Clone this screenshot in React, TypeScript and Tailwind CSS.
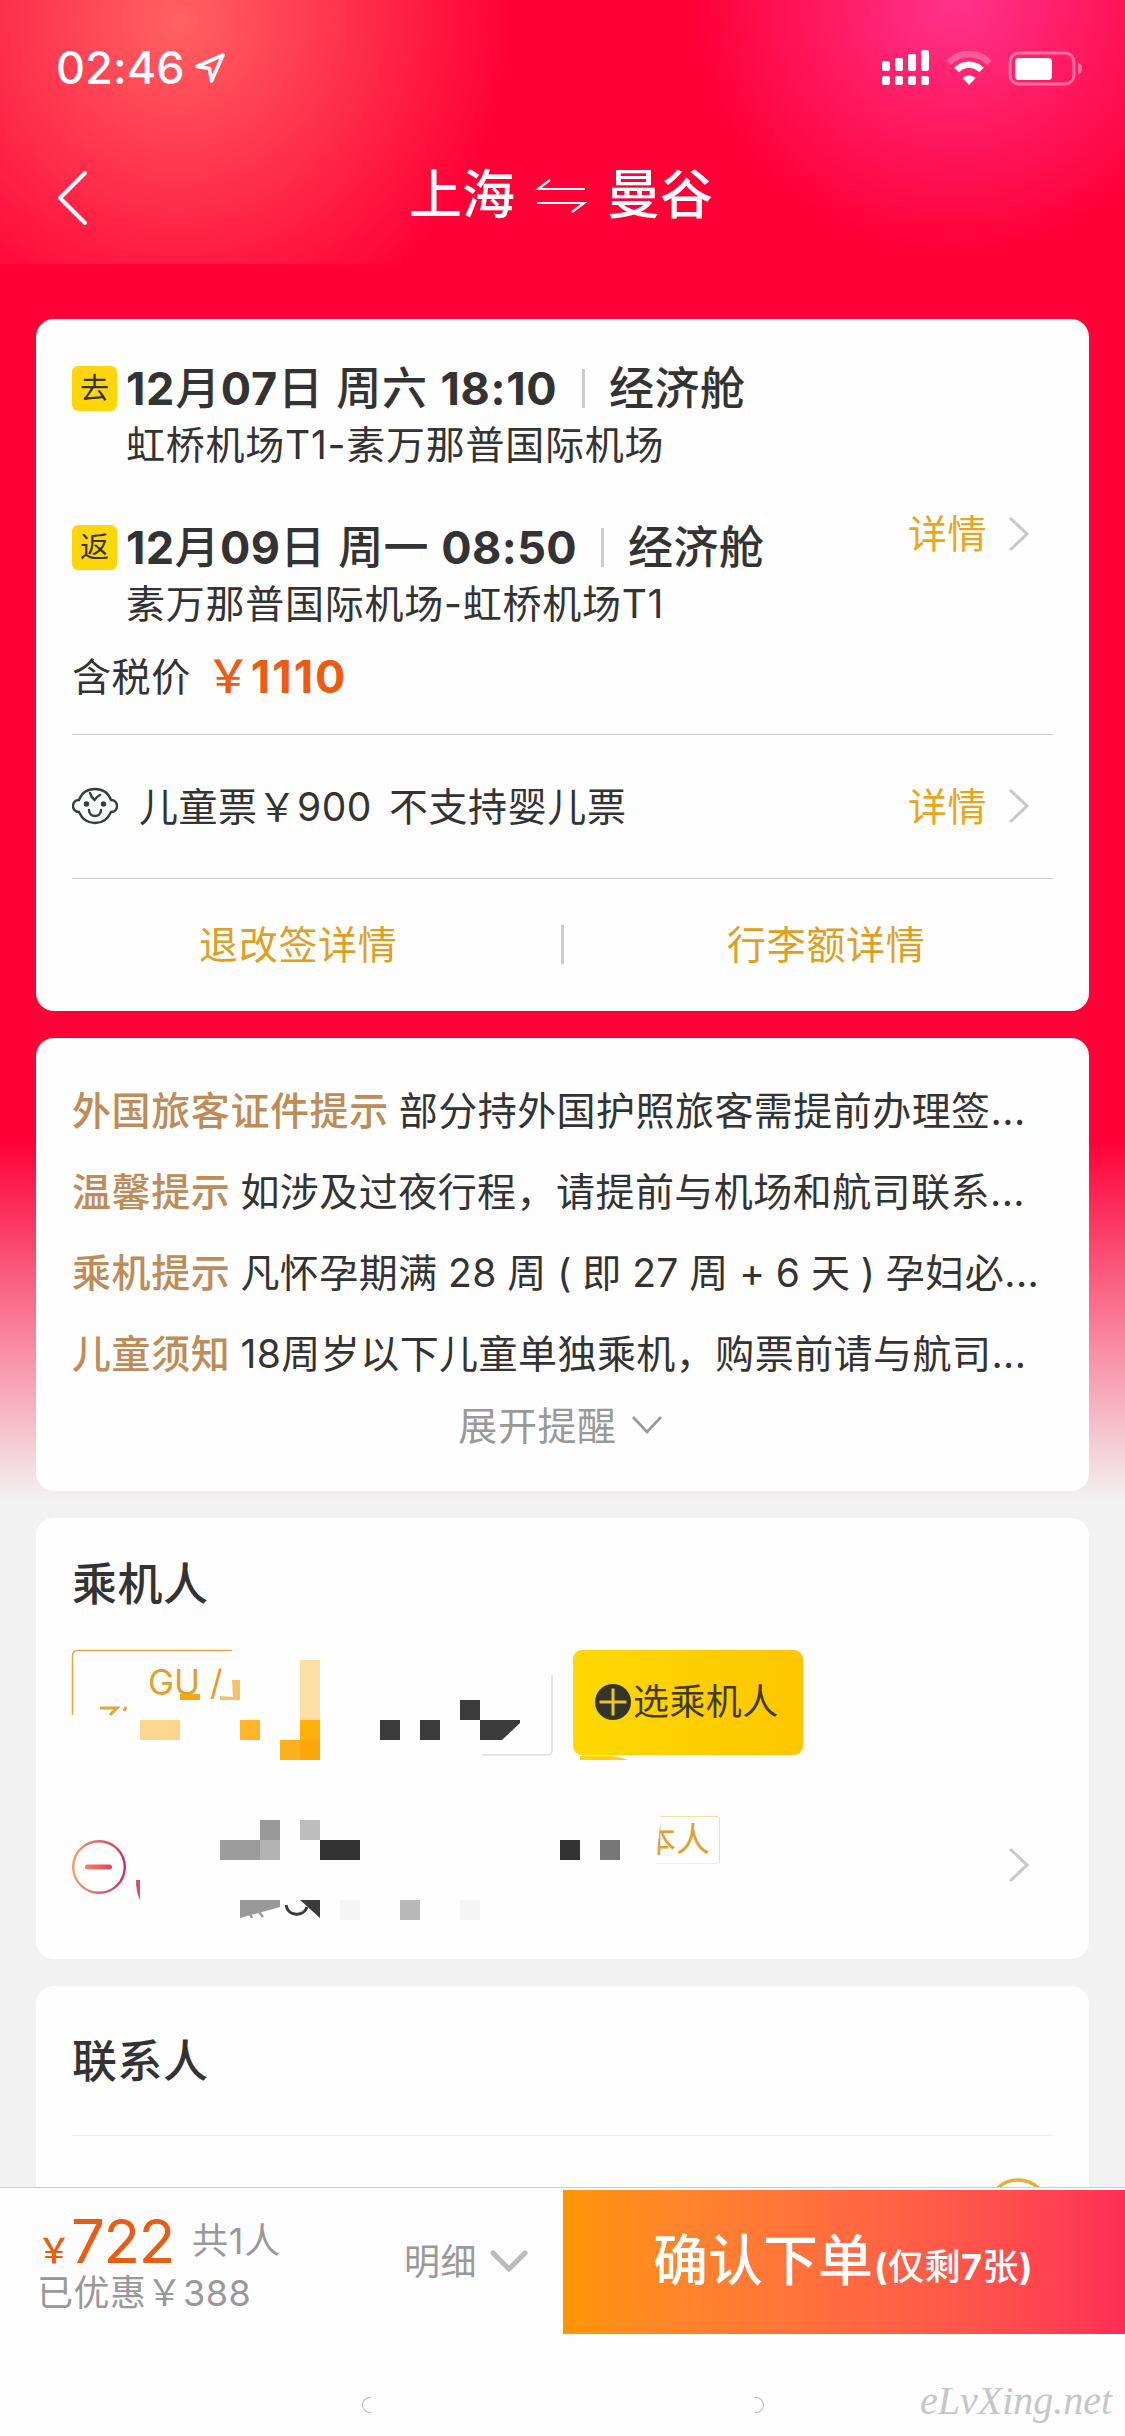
import type { ReactNode } from 'react';

function StatusBar() {
  return (
    <div className="flex h-[134px] items-center justify-between pr-[41px] pl-[56px]">
      <div className="flex items-center gap-[9px] pt-px">
        <span className="text-[45px] leading-none font-medium tracking-[0.1px]">02:46</span>
        <svg width="32" height="32" viewBox="0 0 32 32" fill="none">
          <path d="M29 3 L3 14.5 L15.5 16.5 L17.5 29 Z" stroke="#fff" strokeWidth="3.6" strokeLinejoin="round" />
        </svg>
      </div>
      <svg width="202" height="40" viewBox="0 0 202 40">
        <g fill="#fff">
          <rect x="0" y="14" width="8" height="10" rx="2" />
          <rect x="13" y="11" width="8" height="13" rx="2" />
          <rect x="26" y="7" width="8" height="17" rx="2" />
          <rect x="39" y="3" width="8" height="21" rx="2" />
          <rect x="0" y="29" width="8" height="9" rx="2" />
          <rect x="13" y="29" width="8" height="9" rx="2" />
          <rect x="26" y="29" width="8" height="9" rx="2" />
          <rect x="39" y="29" width="8" height="9" rx="2" />
        </g>
        <g fill="none" strokeWidth="6.5">
          <path d="M66.5 16 A28 28 0 0 1 107.500 16" stroke="#fff" strokeOpacity="0.25" />
          <path d="M74.500 23 A17.500 17.500 0 0 1 99.500 23" stroke="#fff" />
        </g>
        <path d="M80.500 31 Q87 25.500 93.500 31 L87 38 Z" fill="#fff" />
        <rect x="128" y="6" width="64" height="31" rx="9" fill="none" stroke="#fff" strokeOpacity="0.38" strokeWidth="3" />
        <rect x="133" y="11" width="37" height="22" rx="4" fill="#fff" />
        <path d="M196 15.500 Q200 17 200 21.500 Q200 26 196 27.500 Z" fill="#fff" fillOpacity="0.38" />
      </svg>
    </div>
  );
}

function TitleBar() {
  return (
    <div className="relative flex h-[118px] items-center justify-center pt-[4px] pr-[3px] font-medium">
      <svg className="absolute top-[36px] left-[55px]" width="34" height="56" viewBox="0 0 34 56" fill="none">
        <path d="M30 3 L5 28 L30 53" stroke="#fff" strokeWidth="4" strokeLinecap="round" strokeLinejoin="round" />
      </svg>
      <span className="text-[53px] leading-none">上海</span>
      <svg className="mx-[20px]" width="52" height="36" viewBox="0 0 52 36" fill="none" stroke="#fff" strokeWidth="2.2">
        <path d="M50 12 H3 L15 3" />
        <path d="M2 26 H49 L37 35" />
      </svg>
      <span className="text-[53px] leading-none">曼谷</span>
    </div>
  );
}

function ChevronRight() {
  return (
    <svg width="22" height="36" viewBox="0 0 22 36" fill="none">
      <path d="M2 2 L19 18 L2 34" stroke="#c8c8c8" strokeWidth="3" />
    </svg>
  );
}

function BabyIcon() {
  return (
    <svg width="46" height="38" viewBox="0 0 46 38" fill="none" stroke="#34403a" strokeWidth="2.4" strokeLinecap="round">
      <path d="M7 13 C10 5 16 2 23 2 C30 2 36 5 39 13 C43 13 45 16 45 19 C45 22 43 25 39 25 C36 32 30 36 23 36 C16 36 10 32 7 25 C3 25 1 22 1 19 C1 16 3 13 7 13 Z" />
      <path d="M18 6 C19 9 20 11 22.500 13 C24 11 26 9 28 8" />
      <path d="M17 23 C17 31 29 31 29 23" />
      <circle cx="14.500" cy="17" r="1.500" fill="#34403a" />
      <circle cx="31.500" cy="17" r="1.500" fill="#34403a" />
    </svg>
  );
}

interface CardProps {
  className?: string;
  children: ReactNode;
}

function Card({ className = '', children }: CardProps) {
  return <section className={`mx-9 shrink-0 rounded-[18px] bg-[#fefefe] px-9 ${className}`}>{children}</section>;
}

interface FlightProps {
  tag: string;
  date: string;
  route: string;
  dateClass: string;
}

function Flight({ tag, date, route, dateClass }: FlightProps) {
  return (
    <div>
      <div className="flex h-[45px] items-center">
        <span className="flex size-[45px] items-center justify-center rounded-md bg-[#ffd60a] text-[29px] leading-none">
          {tag}
        </span>
        <span className={`ml-[9px] text-[45px] leading-none font-medium whitespace-nowrap ${dateClass}`}>
          {date.split(/([\d:]+)/).map((part, i) => (
            <span key={i} className={i % 2 ? 'font-bold' : ''}>
              {part}
            </span>
          ))}
        </span>
        <span className="h-[39px] w-[3px] bg-[#ccc]" />
        <span className="ml-[24px] text-[45px] leading-none font-medium tracking-[0.5px]">经济舱</span>
      </div>
      <div className="mt-[14px] ml-[54px] text-[39px] leading-[40px] tracking-[0.75px] whitespace-nowrap">{route}</div>
    </div>
  );
}

function DetailLink() {
  return (
    <div className="flex items-center gap-[21px] pr-[23px] text-[#e9a61c]">
      <span className="text-[39px] leading-none tracking-[0.5px]">详情</span>
      <ChevronRight />
    </div>
  );
}

function FlightCard() {
  return (
    <Card className="mt-[55px] h-[692px] pt-[47px]">
      <div className="flex h-[368px] justify-between">
        <div>
          <Flight
            tag="去"
            date="12月07日 周六 18:10"
            route="虹桥机场T1-素万那普国际机场"
            dateClass="w-[456px] tracking-[0.7px]"
          />
          <div className="mt-[60px]">
            <Flight
              tag="返"
              date="12月09日 周一 08:50"
              route="素万那普国际机场-虹桥机场T1"
              dateClass="w-[475px] tracking-[0.4px]"
            />
          </div>
          <div className="mt-[30px] flex h-[45px] items-center">
            <span className="text-[39px] leading-none tracking-[0.6px]">含税价</span>
            <span className="ml-[15px] text-[45px] leading-none font-medium text-[#ef5a12]">
              ￥<b className="font-bold tracking-[2px]">1110</b>
            </span>
          </div>
        </div>
        <div className="pt-[148px]">
          <DetailLink />
        </div>
      </div>
      <div className="flex h-[144px] items-center border-t border-[#ccc] pb-px">
        <BabyIcon />
        <span className="ml-[21px] text-[39px] leading-none tracking-[0.5px] whitespace-nowrap">儿童票￥900</span>
        <span className="ml-[17px] grow text-[39px] leading-none tracking-[0.6px]">不支持婴儿票</span>
        <DetailLink />
      </div>
      <div className="flex h-[133px] items-center border-t border-[#ccc] pb-[2px] text-[39px] leading-none tracking-[0.7px] text-[#dfa022]">
        <span className="w-[489px] pl-[127px]">退改签详情</span>
        <span className="h-[39px] w-[3px] bg-[#ccc]" />
        <span className="pl-[163px]">行李额详情</span>
      </div>
    </Card>
  );
}

const notices = [
  { label: '外国旅客证件提示', text: '部分持外国护照旅客需提前办理签...' },
  { label: '温馨提示', text: '如涉及过夜行程，请提前与机场和航司联系...' },
  { label: '乘机提示', text: '凡怀孕期满 28 周 ( 即 27 周 + 6 天 ) 孕妇必...' },
  { label: '儿童须知', text: '18周岁以下儿童单独乘机，购票前请与航司...' },
];

function NoticeCard() {
  return (
    <Card className="mt-[27px] h-[453px] pt-[32px]">
      {notices.map((notice) => (
        <div key={notice.label} className="flex h-[81px] items-center text-[39px] leading-none whitespace-nowrap">
          <span className="font-medium tracking-[0.6px] text-[#bf8b56]">{notice.label}</span>
          <span className="ml-[10px] tracking-[0.45px] [word-spacing:-1px]">{notice.text}</span>
        </div>
      ))}
      <div className="flex h-[62px] items-center justify-center pr-[4px] text-[#999]">
        <span className="text-[39px] leading-none tracking-[0.6px]">展开提醒</span>
        <svg className="ml-[14px]" width="32" height="20" viewBox="0 0 32 20" fill="none">
          <path d="M2 2 L16 17 L30 2" stroke="#999" strokeWidth="2.6" />
        </svg>
      </div>
    </Card>
  );
}

// Mosaic blocks hiding the personal data, drawn in card coordinates
const blocks = [
  { x: 144, y: 176, w: 20, h: 6, fill: '#f5a810' },
  { x: 104, y: 202, w: 40, h: 20, fill: '#fdd690' },
  { x: 204, y: 202, w: 20, h: 20, fill: '#fdb52b' },
  { x: 264, y: 142, w: 20, h: 60, fill: '#fddfa5' },
  { x: 264, y: 202, w: 20, h: 20, fill: '#fdb10a' },
  { x: 244, y: 222, w: 20, h: 20, fill: '#fcb11c' },
  { x: 264, y: 222, w: 20, h: 20, fill: '#fba70a' },
  { x: 344, y: 202, w: 20, h: 20, fill: '#3b3b3b' },
  { x: 384, y: 202, w: 20, h: 20, fill: '#3b3b3b' },
  { x: 424, y: 182, w: 20, h: 20, fill: '#3b3b3b' },
  { x: 224, y: 302, w: 20, h: 20, fill: '#999' },
  { x: 264, y: 302, w: 20, h: 20, fill: '#bdbdbd' },
  { x: 184, y: 322, w: 40, h: 20, fill: '#9c9c9c' },
  { x: 224, y: 322, w: 20, h: 20, fill: '#b3b3b3' },
  { x: 284, y: 322, w: 40, h: 20, fill: '#333' },
  { x: 524, y: 322, w: 20, h: 20, fill: '#333' },
  { x: 564, y: 322, w: 20, h: 20, fill: '#777' },
  { x: 304, y: 382, w: 20, h: 20, fill: '#f5f5f5' },
  { x: 364, y: 382, w: 20, h: 20, fill: '#b8b8b8' },
  { x: 424, y: 382, w: 20, h: 20, fill: '#f5f5f5' },
];

function Mosaic() {
  return (
    <svg className="absolute top-0 left-0" width="700" height="441" viewBox="0 0 700 441" fill="none">
      <path d="M36.500 197 V138 Q36.500 132.500 42 132.500 H196" stroke="#dfa93c" strokeWidth="1.500" />
      <path d="M516 157 V232 Q516 237 511 237 H446" stroke="#ddd" strokeWidth="1.500" />
      <path d="M64 190 H81 L74 197 M90 189 L88 193" stroke="#e3a43c" strokeWidth="3" />
      {blocks.map((b) => (
        <rect key={`${b.x}-${b.y}`} x={b.x} y={b.y} width={b.w} height={b.h} fill={b.fill} />
      ))}
      <path d="M196 162 H204 V182 H184 V178 L197 179 Z" fill="#f6c168" />
      <path d="M444 202 H484 V205 L466 222 H444 Z" fill="#3b3b3b" />
      <path d="M204 382 H244 V389 L204 400 Z" fill="#999" />
      <path d="M214 396 L216 400 M223 394 L227 399" stroke="#999" strokeWidth="2.500" />
      <path d="M250 387 C252 399 268 399 271 389" stroke="#3b3b3b" strokeWidth="3" />
      <path d="M264 382 H284 V400 Z" fill="#3b3b3b" />
      <path d="M100 362 H104 V382 Q100 374 100 362 Z" fill="#cb5068" />
      <path d="M544 238 H575 Q585 239 592 242 H544 Z" fill="#fbd015" />
    </svg>
  );
}

function PassengerCard() {
  return (
    <Card className="relative mt-[27px] h-[441px]">
      <Mosaic />
      <h2 className="pt-[44px] text-[45px] leading-[46px] font-medium tracking-[0.5px]">乘机人</h2>
      <div className="mt-[42px] flex h-[105px]">
        <div className="w-[501px] pt-[15px] pl-[76px] text-[35px] leading-none text-[#e0a12f]">GU /</div>
        <button className="flex w-[230px] items-center rounded-[9px] bg-linear-to-r from-[#ffd900] to-[#fdc600] pb-[2px] pl-[22px]">
          <svg width="36" height="36" viewBox="0 0 36 36">
            <circle cx="18" cy="18" r="18" fill="#33342a" />
            <path d="M18 4.500 V31.500 M4.500 18 H31.500" stroke="#f0c61c" strokeWidth="3" />
          </svg>
          <span className="ml-[2px] text-[36px] leading-none tracking-[0.4px] text-[#433a0b]">选乘机人</span>
        </button>
      </div>
      <div className="mt-[59px] flex h-[106px] items-center">
        <svg width="54" height="54" viewBox="0 0 54 54" fill="none">
          <defs>
            <linearGradient id="minus" gradientUnits="userSpaceOnUse" x1="0" y1="0" x2="54" y2="0">
              <stop offset="0" stopColor="#f3a06a" />
              <stop offset="1" stopColor="#cf2a5f" />
            </linearGradient>
          </defs>
          <circle cx="27" cy="27" r="25.800" stroke="url(#minus)" strokeWidth="2.400" />
          <rect x="13" y="24.500" width="27" height="5" rx="2.500" fill="url(#minus)" />
        </svg>
        <div className="mt-[-55px] ml-[504px] flex h-[48px] w-[90px] items-center justify-end rounded-[3px] border border-[#f2dfa8] pr-[9px] text-[34px] leading-none whitespace-nowrap text-[#e0a12f] [clip-path:polygon(31px_0,100%_0,100%_100%,26px_100%)]">
          本人
        </div>
        <div className="grow" />
        <div className="mr-[23px] pb-[4px]">
          <ChevronRight />
        </div>
      </div>
    </Card>
  );
}

function ContactCard() {
  return (
    <Card className="mt-[27px] h-[260px]">
      <h2 className="h-[150px] border-b border-[#eee] pt-[53px] text-[45px] leading-[46px] font-medium tracking-[0.5px]">
        联系人
      </h2>
      <div className="flex justify-end pt-[42px]">
        <svg className="mr-[3px]" width="64" height="64" viewBox="0 0 64 64" fill="none">
          <circle cx="32" cy="32" r="30" stroke="#eaae32" strokeWidth="3.500" />
        </svg>
      </div>
    </Card>
  );
}

function BottomBar() {
  return (
    <footer className="absolute inset-x-0 bottom-0 h-[249px] border-t border-[#ccc] bg-[#fdfdfd] text-[#999]">
      <div className="flex h-[146px] pt-[2px]">
        <div className="w-[367px] pl-[37px]">
          <div className="flex h-[83px] items-baseline pt-[19px] whitespace-nowrap">
            <span className="text-[34px] leading-none font-medium text-[#e95c14]">￥</span>
            <span className="text-[60px] leading-[64px] tracking-[-1.4px] text-[#e95c14]">722</span>
            <span className="ml-[18px] -translate-y-[9px] text-[36px] leading-none tracking-[0.8px]">共1人</span>
          </div>
          <div className="text-[36px] leading-[40px] tracking-[0.5px] whitespace-nowrap">已优惠￥388</div>
        </div>
        <div className="flex w-[196px] items-center pl-[37px]">
          <span className="text-[36px] leading-none tracking-[0.4px]">明细</span>
          <svg className="ml-[13px]" width="38" height="24" viewBox="0 0 38 24" fill="none">
            <path d="M3 3 L19 19 L35 3" stroke="#bbb" strokeWidth="5" strokeLinecap="round" />
          </svg>
        </div>
        <button className="flex h-[144px] grow items-baseline bg-linear-to-r from-[#ff9500] to-[#ff2d55] pt-[42px] pl-[90px] font-medium text-white">
          <span className="text-[55px] leading-[56px]">确认下单</span>
          <span className="ml-px text-[36px] leading-[56px] tracking-[0.5px]">
            <b className="font-bold">(</b>仅剩<b className="font-bold">7</b>张<b className="font-bold">)</b>
          </span>
        </button>
      </div>
      <div className="relative flex h-[102px] pt-[63px] pl-[362px]">
        <div className="h-[16px] w-[9px] rounded-l-full border border-r-0 border-[#bbb]" />
        <div className="ml-[384px] h-[16px] w-[9px] rounded-r-full border border-l-0 border-[#bbb]" />
        <span className="absolute top-[47px] left-[920px] font-['Liberation_Serif',serif] text-[40px] leading-none text-[#c6c6c6] italic">
          eLvXing.net
        </span>
      </div>
    </footer>
  );
}

export default function App() {
  return (
    <main className="relative flex h-[2436px] w-[1125px] flex-col overflow-hidden bg-[linear-gradient(#ff0037_0px,#ff0037_1140px,#f2f2f2_1500px)] font-['Inter','Noto_Sans_CJK_SC',sans-serif] text-[#333]">
      <header className="h-[264px] shrink-0 bg-[radial-gradient(circle_335px_at_178px_20px,#ff6262,#ff626200),radial-gradient(ellipse_265px_255px_at_955px_0px,#ff338c,#ff338c00)] text-white">
        <StatusBar />
        <TitleBar />
      </header>
      <FlightCard />
      <NoticeCard />
      <PassengerCard />
      <ContactCard />
      <BottomBar />
    </main>
  );
}
